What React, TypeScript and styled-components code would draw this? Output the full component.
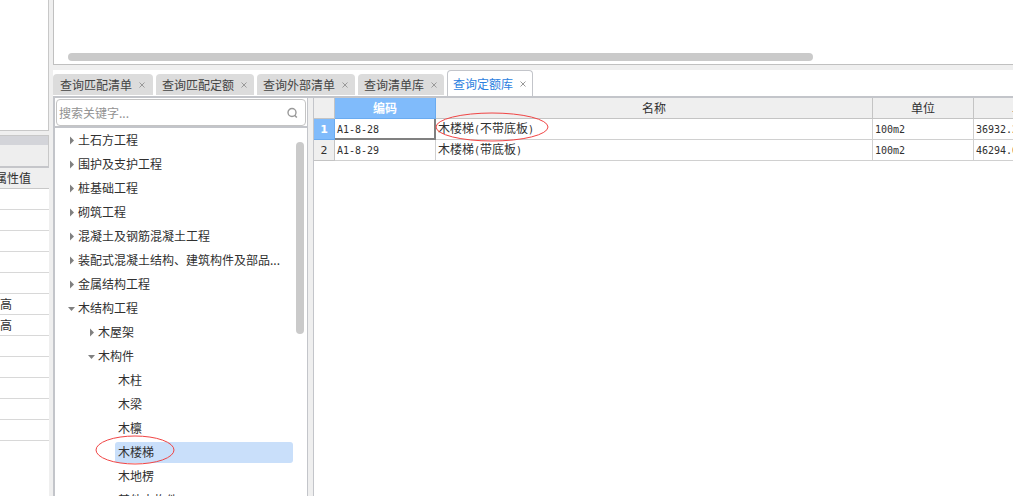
import React from "react";
import styled, { createGlobalStyle, css } from "styled-components";

const GlobalStyle = createGlobalStyle`
  * { box-sizing: border-box; }
  html, body, #root { height: 100%; margin: 0; }
  body {
    overflow: hidden;
    background: #efefef;
    color: #303030;
    font-family: "Noto Sans CJK SC", sans-serif;
    font-size: 12px;
    line-height: 20px;
  }
  button, input { font: inherit; color: inherit; }
`;

const Window = styled.div`
  display: flex;
  height: 100vh;
  overflow: hidden;
`;

const Sidebar = styled.aside`
  flex: 0 0 49px;
  display: flex;
  flex-direction: column;
  background: #fff;
`;

const SidebarTop = styled.div`
  flex: 0 0 131px;
  border-right: 1px solid #c8c8c8;
  border-bottom: 1px solid #c8c8c8;
`;

const SidebarBar = styled.div`
  flex: 0 0 37px;
  border-top: 4px solid #efefef;
  border-bottom: 2px solid #c5c6ca;
  background: linear-gradient(#d3d4d9 10px, #eeeeee 10px);
  box-shadow: inset -1px 1px #c8c8c8;
`;

const PropertyTable = styled.table`
  width: 100%;
  table-layout: fixed;
  border-collapse: separate;
  border-spacing: 0;
`;

const PropertyHead = styled.th`
  height: 21px;
  padding: 0 18px 0 0;
  border-bottom: 1px solid #c8c8c8;
  background: #efefef;
  font-weight: 400;
  direction: rtl;
  white-space: nowrap;
  overflow: hidden;
`;

const PropertyCell = styled.td`
  height: 21px;
  padding: 0;
  border-bottom: 1px solid #d8d8d8;
`;

const Main = styled.main`
  flex: 1;
  min-width: 0;
  margin-left: 4px;
  display: flex;
  flex-direction: column;
`;

const UpperPane = styled.section`
  flex: 0 0 65px;
  display: flex;
  align-items: flex-end;
  padding: 0 200px 3px 14px;
  border-left: 1px solid #c0c0c0;
  border-bottom: 1px solid #c0c0c0;
  background: #fff;
`;

const HorizontalThumb = styled.div`
  flex: 1;
  height: 8px;
  border-radius: 4px;
  background: #cacaca;
`;

const TabBar = styled.div`
  flex: 0 0 28px;
  margin-top: 5px;
  display: flex;
  align-items: flex-end;
  gap: 3px;
  border-bottom: 2px solid #c3c5ca;
  background: #fff;
`;

const Tab = styled.button<{ $active?: boolean }>`
  height: 21px;
  margin-bottom: 1px;
  padding: 0 6px;
  display: flex;
  align-items: center;
  gap: 6px;
  border: 0;
  border-radius: 4px 4px 0 0;
  background: #dcdcdc;
  color: #444;
  white-space: nowrap;
  &:first-child { padding: 0 7px; }
  ${(p) =>
    p.$active &&
    css`
      height: 26px;
      margin-bottom: 0;
      padding: 0 5px;
      border: 1px solid #c3c5ca;
      border-bottom: 0;
      background: #fff;
      color: #2c7fe0;
    `}
`;

const Workspace = styled.div`
  flex: 1;
  min-height: 0;
  display: flex;
`;

const TreePane = styled.section`
  flex: 0 0 255px;
  display: flex;
  flex-direction: column;
  border-left: 2px solid #c3c5ca;
  border-right: 1px solid #c3c5ca;
  background: #fff;
`;

const SearchRow = styled.div`
  flex: 0 0 30px;
  padding: 1px 1px 0;
  border-bottom: 2px solid #c3c5ca;
`;

const SearchBox = styled.label`
  height: 27px;
  display: flex;
  align-items: center;
  padding: 0 7px 0 2px;
  border: 1px solid #c4c4c4;
  border-radius: 4px;
`;

const SearchInput = styled.input`
  flex: 1;
  min-width: 0;
  height: 20px;
  padding: 0;
  border: 0;
  outline: 0;
  background: transparent;
  &::placeholder { color: #929292; opacity: 1; }
`;

const TreeScroll = styled.div`
  flex: 1;
  min-height: 0;
  display: flex;
  overflow: hidden;
`;

const Tree = styled.ul`
  flex: 1;
  min-width: 0;
  margin: 0;
  padding: 0 0 0 13px;
  list-style: none;
`;

const TreeRow = styled.li<{ $level: number }>`
  height: 24px;
  display: flex;
  align-items: center;
  padding-top: 1px;
  padding-left: ${(p) => p.$level * 20}px;
`;

const Toggle = styled.button`
  flex: 0 0 7px;
  height: 9px;
  padding: 0;
  display: flex;
  align-items: center;
  border: 0;
  background: none;
`;

const ToggleSpace = styled.span`
  flex: 0 0 7px;
`;

const TreeLabel = styled.span<{ $selected?: boolean }>`
  flex: 1;
  height: 21px;
  padding-left: 3px;
  border-radius: 3px;
  line-height: 20px;
  white-space: nowrap;
  background: ${(p) => (p.$selected ? "#c9dffa" : "transparent")};
`;

const MarkedText = styled.span`
  position: relative;
`;

const VerticalTrack = styled.div`
  flex: 0 0 14px;
  padding: 14px 3px 0;
`;

const VerticalThumb = styled.div`
  height: 192px;
  border-radius: 4px;
  background: #cacaca;
`;

const GridPane = styled.section`
  flex: 1;
  min-width: 0;
  margin-left: 5px;
  border-left: 1px solid #c3c5ca;
  background: #fff;
  overflow: hidden;
`;

const Grid = styled.table`
  width: calc(100% + 62px);
  table-layout: fixed;
  border-collapse: separate;
  border-spacing: 0;
`;

const Col = styled.col<{ $width?: number }>`
  width: ${(p) => (p.$width ? `${p.$width}px` : "auto")};
`;

const HeadCell = styled.th<{ $active?: boolean }>`
  height: 21px;
  padding: 0;
  border-right: 1px solid #c4c4c4;
  border-bottom: 1px solid #c4c4c4;
  background: #efefef;
  font-weight: 400;
  text-align: center;
  ${(p) =>
    p.$active &&
    css`
      border-color: #6aabf0;
      background: #80bbfb;
      color: #fff;
      font-weight: 700;
    `}
`;

const RowNumber = styled(HeadCell)`
  padding-top: 2px;
  font-family: "DejaVu Sans", sans-serif;
  font-size: 11px;
  line-height: 18px;
`;

const BodyCell = styled.td<{ $current?: boolean }>`
  height: 21px;
  padding: 0 2px;
  border-right: 1px solid #d0d0d0;
  border-bottom: 1px solid #d0d0d0;
  line-height: 18px;
  vertical-align: top;
  white-space: nowrap;
  ${(p) => p.$current && css`box-shadow: inset -1px -1px #808080; border-color: #808080;`}
`;

const Latin = styled.span`
  font-family: "DejaVu Sans Mono", monospace;
  font-size: 10px;
  line-height: 1;
`;

const EllipseSvg = styled.svg`
  position: absolute;
  pointer-events: none;
  overflow: visible;
`;

const TreeEllipse = styled(EllipseSvg)`
  left: -23px;
  top: -8px;
`;

const CellEllipse = styled(EllipseSvg)`
  left: -3px;
  top: -7px;
`;

function Ellipse({ as: Box, width, height }: { as: typeof TreeEllipse; width: number; height: number }) {
  return (
    <Box width={width} height={height} aria-hidden="true">
      <ellipse cx={width / 2} cy={height / 2} rx={width / 2 - 1} ry={height / 2 - 1} fill="none" stroke="#f04444" />
    </Box>
  );
}

function CloseIcon() {
  return (
    <svg width="8" height="8" viewBox="0 0 8 8" aria-hidden="true">
      <path d="M1.5 1.5l5 5m0-5l-5 5" stroke="#999" fill="none" />
    </svg>
  );
}

function SearchIcon() {
  return (
    <svg width="11" height="12" viewBox="0 0 11 12" aria-hidden="true">
      <circle cx="5" cy="5.500" r="4" stroke="#999" strokeWidth="1.400" fill="none" />
      <path d="M7.600 8.200l2.200 2.300" stroke="#999" strokeWidth="1.600" />
    </svg>
  );
}

function Arrow({ open }: { open: boolean }) {
  return (
    <svg width="7" height="9" viewBox="0 0 7 9" aria-hidden="true">
      <path d={open ? "M0 3h7L3.500 7z" : "M2 0.500v8L6 4.500z"} fill="#808080" />
    </svg>
  );
}

function CellText({ text }: { text: string }) {
  return (
    <>
      {text.split(/([ -~]+)/).filter(Boolean).map((part, i) =>
        /[ -~]/.test(part) ? <Latin key={i}>{part}</Latin> : part
      )}
    </>
  );
}

const tabs = ["查询匹配清单", "查询匹配定额", "查询外部清单", "查询清单库", "查询定额库"];
const properties = ["", "", "", "", "", "高", "高", "", "", "", "", ""];

type Node = { label: string; level: number; open?: boolean };
const nodes: Node[] = [
  { label: "土石方工程", level: 0, open: false },
  { label: "围护及支护工程", level: 0, open: false },
  { label: "桩基础工程", level: 0, open: false },
  { label: "砌筑工程", level: 0, open: false },
  { label: "混凝土及钢筋混凝土工程", level: 0, open: false },
  { label: "装配式混凝土结构、建筑构件及部品...", level: 0, open: false },
  { label: "金属结构工程", level: 0, open: false },
  { label: "木结构工程", level: 0, open: true },
  { label: "木屋架", level: 1, open: false },
  { label: "木构件", level: 1, open: true },
  { label: "木柱", level: 2 },
  { label: "木梁", level: 2 },
  { label: "木檩", level: 2 },
  { label: "木楼梯", level: 2 },
  { label: "木地楞", level: 2 },
  { label: "其他木构件", level: 2 },
];

const rows = [
  { code: "A1-8-28", name: "木楼梯(不带底板)", unit: "100m2", price: "36932.2" },
  { code: "A1-8-29", name: "木楼梯(带底板)", unit: "100m2", price: "46294.0" },
];

export default function App() {
  const selected = "木楼梯";
  return (
    <Window>
      <GlobalStyle />
      <Sidebar>
        <SidebarTop />
        <SidebarBar />
        <PropertyTable>
          <thead>
            <tr><PropertyHead>属性值</PropertyHead></tr>
          </thead>
          <tbody>
            {properties.map((value, i) => (
              <tr key={i}><PropertyCell>{value}</PropertyCell></tr>
            ))}
          </tbody>
        </PropertyTable>
      </Sidebar>
      <Main>
        <UpperPane><HorizontalThumb /></UpperPane>
        <TabBar role="tablist">
          {tabs.map((tab, i) => (
            <Tab key={tab} role="tab" aria-selected={i === 4} $active={i === 4}>
              {tab}
              <CloseIcon />
            </Tab>
          ))}
        </TabBar>
        <Workspace>
          <TreePane>
            <SearchRow>
              <SearchBox>
                <SearchInput type="text" aria-label="搜索关键字" placeholder="搜索关键字..." />
                <SearchIcon />
              </SearchBox>
            </SearchRow>
            <TreeScroll>
              <Tree>
                {nodes.map((node) => (
                  <TreeRow key={node.label} $level={node.level}>
                    {node.open === undefined ? (
                      <ToggleSpace />
                    ) : (
                      <Toggle aria-label={node.label} aria-expanded={node.open}>
                        <Arrow open={node.open} />
                      </Toggle>
                    )}
                    <TreeLabel $selected={node.label === selected}>
                      {node.label === selected ? (
                        <MarkedText>
                          {node.label}
                          <Ellipse as={TreeEllipse} width={80} height={30} />
                        </MarkedText>
                      ) : (
                        node.label
                      )}
                    </TreeLabel>
                  </TreeRow>
                ))}
              </Tree>
              <VerticalTrack><VerticalThumb /></VerticalTrack>
            </TreeScroll>
          </TreePane>
          <GridPane>
            <Grid>
              <colgroup>
                <Col $width={21} />
                <Col $width={101} />
                <Col />
                <Col $width={101} />
                <Col $width={101} />
              </colgroup>
              <thead>
                <tr>
                  <HeadCell />
                  <HeadCell $active>编码</HeadCell>
                  <HeadCell>名称</HeadCell>
                  <HeadCell>单位</HeadCell>
                  <HeadCell>单价</HeadCell>
                </tr>
              </thead>
              <tbody>
                {rows.map((row, i) => (
                  <tr key={row.code}>
                    <RowNumber scope="row" $active={i === 0}>{i + 1}</RowNumber>
                    <BodyCell $current={i === 0}><CellText text={row.code} /></BodyCell>
                    <BodyCell>
                      <MarkedText>
                        <CellText text={row.name} />
                        {i === 0 && <Ellipse as={CellEllipse} width={114} height={30} />}
                      </MarkedText>
                    </BodyCell>
                    <BodyCell><CellText text={row.unit} /></BodyCell>
                    <BodyCell><CellText text={row.price} /></BodyCell>
                  </tr>
                ))}
              </tbody>
            </Grid>
          </GridPane>
        </Workspace>
      </Main>
    </Window>
  );
}
